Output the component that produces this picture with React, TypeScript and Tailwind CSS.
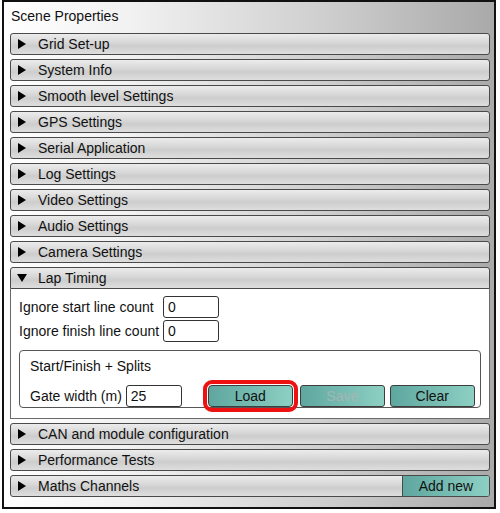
import React from "react";

const sections = [
  "Grid Set-up",
  "System Info",
  "Smooth level Settings",
  "GPS Settings",
  "Serial Application",
  "Log Settings",
  "Video Settings",
  "Audio Settings",
  "Camera Settings",
];

const headerCls =
  "flex h-[22px] items-center rounded-[3px] border-[1.5px] border-[#4a4a4a] bg-[linear-gradient(to_bottom,#ececec_0%,#d6d6d6_45%,#cdcdcd_60%,#dedede_100%)] text-[14px] text-[#111] whitespace-nowrap";

function Arrow({ open }: { open?: boolean }) {
  return (
    <svg width="10" height="10" viewBox="0 0 10 10" className="ml-[6px] mr-[11px] shrink-0">
      {open ? <polygon points="0,1 10,1 5,9" fill="#000" /> : <polygon points="1,0 9,5 1,10" fill="#000" />}
    </svg>
  );
}

function Header({ title }: { title: string }) {
  return (
    <div className={headerCls}>
      <Arrow />
      <span>{title}</span>
    </div>
  );
}

const btnCls =
  "h-[22px] w-[85px] shrink-0 rounded-[3px] border-[1.5px] border-[#3d3d3d] bg-[linear-gradient(to_right,#5ea79f,#8dcfc3)] text-[14px]";

const inputCls =
  "flex h-[22px] w-[56px] shrink-0 items-center rounded-[3px] border-[1.5px] border-[#333] pl-[4px]";

export default function App() {
  return (
    <div className="h-[513px] w-[500px] bg-white font-['Liberation_Sans',Arial,sans-serif]">
      <div className="ml-[2px] flex h-[509px] w-[494px] flex-col border-2 border-[#111] bg-[linear-gradient(to_right,#ffffff_0%,#f2f2f2_25%,#cfcfcf_65%,#a9a9a9_100%)] pl-[6px] pr-[4px]">
        <div className="h-[31px] pl-[1px] pt-[4px] text-[14px] text-[#111]">Scene Properties</div>
        <div className="flex flex-col gap-[4px]">
          {sections.map((s) => (
            <Header key={s} title={s} />
          ))}
          <div>
            <div className={headerCls + " rounded-b-none"}>
              <Arrow open />
              <span>Lap Timing</span>
            </div>
            <div className="flex h-[130px] flex-col whitespace-nowrap border-x-[1.5px] border-b-[1.5px] border-[#6a6a6a] bg-white px-[8px] pt-[7px] text-[14px] text-[#111]">
              <div className="flex h-[22px] items-center">
                <span className="w-[144px] shrink-0">Ignore start line count</span>
                <div className={inputCls}>0</div>
              </div>
              <div className="mt-[2px] flex h-[22px] items-center">
                <span className="w-[144px] shrink-0">Ignore finish line count</span>
                <div className={inputCls}>0</div>
              </div>
              <div className="mt-[8px] h-[58px] rounded-[4px] border-[1.5px] border-[#555] pl-[10px] pr-[6px]">
                <div className="pt-[5px]">Start/Finish + Splits</div>
                <div className="mt-[8px] flex items-center">
                  <span className="shrink-0">Gate width (m)</span>
                  <div className={inputCls + " ml-[4px]"}>25</div>
                  <button className={btnCls + " ml-[26px] w-[82px] outline-[4px] outline-offset-[1px] outline-[#ee1111] outline-solid rounded-[4px]"}>
                    Load
                  </button>
                  <button className={btnCls + " ml-[7px] text-[#a4b6b3]"}>Save</button>
                  <button className={btnCls + " ml-[5px]"}>Clear</button>
                </div>
              </div>
            </div>
          </div>
          <Header title="CAN and module configuration" />
          <Header title="Performance Tests" />
          <div className={headerCls + " overflow-hidden"}>
            <Arrow />
            <span className="flex-1">Maths Channels</span>
            <div className="flex h-full w-[87px] items-center justify-center border-l-[1.5px] border-[#4a4a4a] bg-[linear-gradient(to_right,#5ea79f,#8dcfc3)]">
              Add new
            </div>
          </div>
        </div>
      </div>
    </div>
  );
}
